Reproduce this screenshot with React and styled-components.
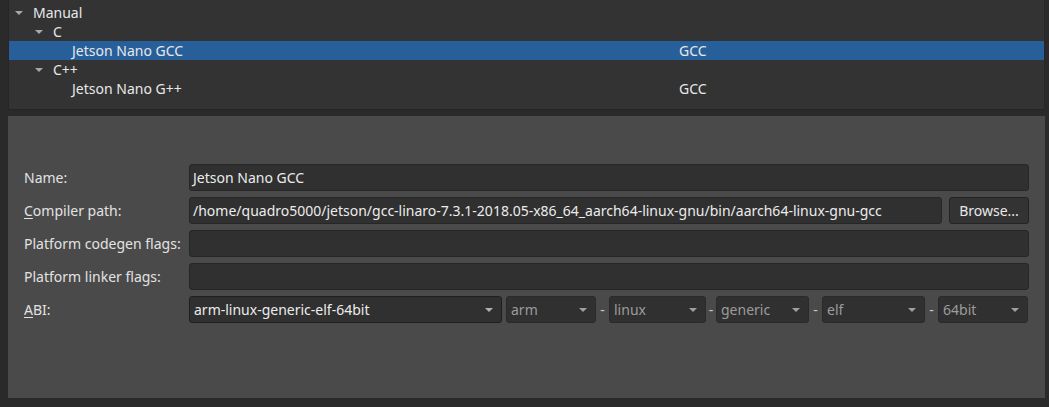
import styled, { createGlobalStyle } from "styled-components";

const Global = createGlobalStyle`
  html, body {
    margin: 0;
    padding: 0;
    background: #2a2a2a;
    font-family: "Noto Sans", "Open Sans", sans-serif;
    font-size: 14px;
    color: #e6e6e6;
    overflow: hidden;
  }
`;

const Page = styled.div`
  width: 1049px;
  height: 407px;
  padding: 0 4px 0 8px;
  box-sizing: border-box;
  display: flex;
  flex-direction: column;
  gap: 6px;
`;

const Tree = styled.div`
  margin-top: -16px;
  background: #333333;
  border: 1px solid #262626;
  border-top: none;
  padding-bottom: 11px;
`;

const Row = styled.div`
  height: 19px;
  display: flex;
  align-items: center;
  background: ${(p) => (p.$selected ? "#275f9a" : "transparent")};
  color: #e8e8e8;
  white-space: nowrap;
`;

const Name = styled.div`
  width: ${(p) => 670 - p.$indent}px;
  padding-left: ${(p) => p.$indent}px;
  display: flex;
  align-items: center;
`;

const Arrow = styled.span`
  width: 0;
  height: 0;
  border-left: 4px solid transparent;
  border-right: 4px solid transparent;
  border-top: 4px solid #a8a8a8;
  margin-right: 10px;
`;

const Spacer = styled.span`
  width: 18px;
`;

const Column = styled.div`
  flex: 1;
`;

const Panel = styled.div`
  flex: 1;
  margin-bottom: 9px;
  margin-right: 0;
  background: #4a4a4a;
  padding: 48px 16px 0 16px;
`;

const Form = styled.div`
  display: grid;
  grid-template-columns: 165px 1fr;
  grid-auto-rows: 27px;
  row-gap: 6px;
  align-items: center;
`;

const Label = styled.div`
  color: #e2e2e2;
  u {
    text-decoration-thickness: 1px;
    text-underline-offset: 2px;
  }
`;

const Line = styled.div`
  display: flex;
  align-items: center;
  gap: 7px;
  height: 27px;
`;

const Field = styled.div`
  flex: 1;
  height: 27px;
  box-sizing: border-box;
  background: #303030;
  border: 1px solid #262626;
  border-radius: 3px;
  padding: 0 3px;
  display: flex;
  align-items: center;
  color: #ececec;
  white-space: nowrap;
  overflow: hidden;
`;

const Button = styled.div`
  width: 80px;
  height: 27px;
  box-sizing: border-box;
  background: #333333;
  border: 1px solid #232323;
  border-radius: 3px;
  display: flex;
  align-items: center;
  justify-content: center;
  color: #e8e8e8;
`;

const Combo = styled.div`
  width: ${(p) => p.$w}px;
  height: 27px;
  box-sizing: border-box;
  background: #303030;
  border: 1px solid ${(p) => (p.$main ? "#1f1f1f" : "#2a2a2a")};
  border-radius: 3px;
  padding: 0 8px 0 4px;
  display: flex;
  align-items: center;
  justify-content: space-between;
  color: ${(p) => (p.$main ? "#ececec" : "#9c9c9c")};
  white-space: nowrap;
  &::after {
    content: "";
    border-left: 4px solid transparent;
    border-right: 4px solid transparent;
    border-top: 4px solid ${(p) => (p.$main ? "#b0b0b0" : "#a0a0a0")};
  }
`;

const Dash = styled.span`
  width: ${(p) => p.$w}px;
  text-align: center;
  color: #c8c8c8;
`;

const AbiLine = styled.div`
  display: flex;
  align-items: center;
  height: 27px;
`;

const tree = [
  { indent: 6, arrow: true, name: "Manual" },
  { indent: 26, arrow: true, name: "C" },
  { indent: 45, name: "Jetson Nano GCC", type: "GCC", selected: true },
  { indent: 26, arrow: true, name: "C++" },
  { indent: 45, name: "Jetson Nano G++", type: "GCC" },
];

const abi = [
  { text: "arm", w: 90, dash: 13 },
  { text: "linux", w: 97, dash: 10 },
  { text: "generic", w: 93, dash: 13 },
  { text: "elf", w: 103, dash: 13 },
  { text: "64bit", w: 90 },
];

export default function App() {
  return (
    <>
      <Global />
      <Page>
        <Tree>
          <Row />
          {tree.map((r) => (
            <Row key={r.name} $selected={r.selected}>
              <Name $indent={r.indent}>
                {r.arrow ? <Arrow /> : <Spacer />}
                {r.name}
              </Name>
              <Column>{r.type}</Column>
            </Row>
          ))}
        </Tree>
        <Panel>
          <Form>
            <Label>Name:</Label>
            <Line>
              <Field>Jetson Nano GCC</Field>
            </Line>
            <Label>
              <u>C</u>ompiler path:
            </Label>
            <Line>
              <Field>
                /home/quadro5000/jetson/gcc-linaro-7.3.1-2018.05-x86_64_aarch64-linux-gnu/bin/aarch64-linux-gnu-gcc
              </Field>
              <Button>Browse...</Button>
            </Line>
            <Label>Platform codegen flags:</Label>
            <Line>
              <Field />
            </Line>
            <Label>Platform linker flags:</Label>
            <Line>
              <Field />
            </Line>
            <Label>
              <u>A</u>BI:
            </Label>
            <AbiLine>
              <Combo $w={313} $main>
                arm-linux-generic-elf-64bit
              </Combo>
              <Dash $w={4} />
              {abi.map((c) => (
                <>
                  <Combo key={c.text} $w={c.w}>
                    {c.text}
                  </Combo>
                  {c.dash && <Dash $w={c.dash}>-</Dash>}
                </>
              ))}
            </AbiLine>
          </Form>
        </Panel>
      </Page>
    </>
  );
}
